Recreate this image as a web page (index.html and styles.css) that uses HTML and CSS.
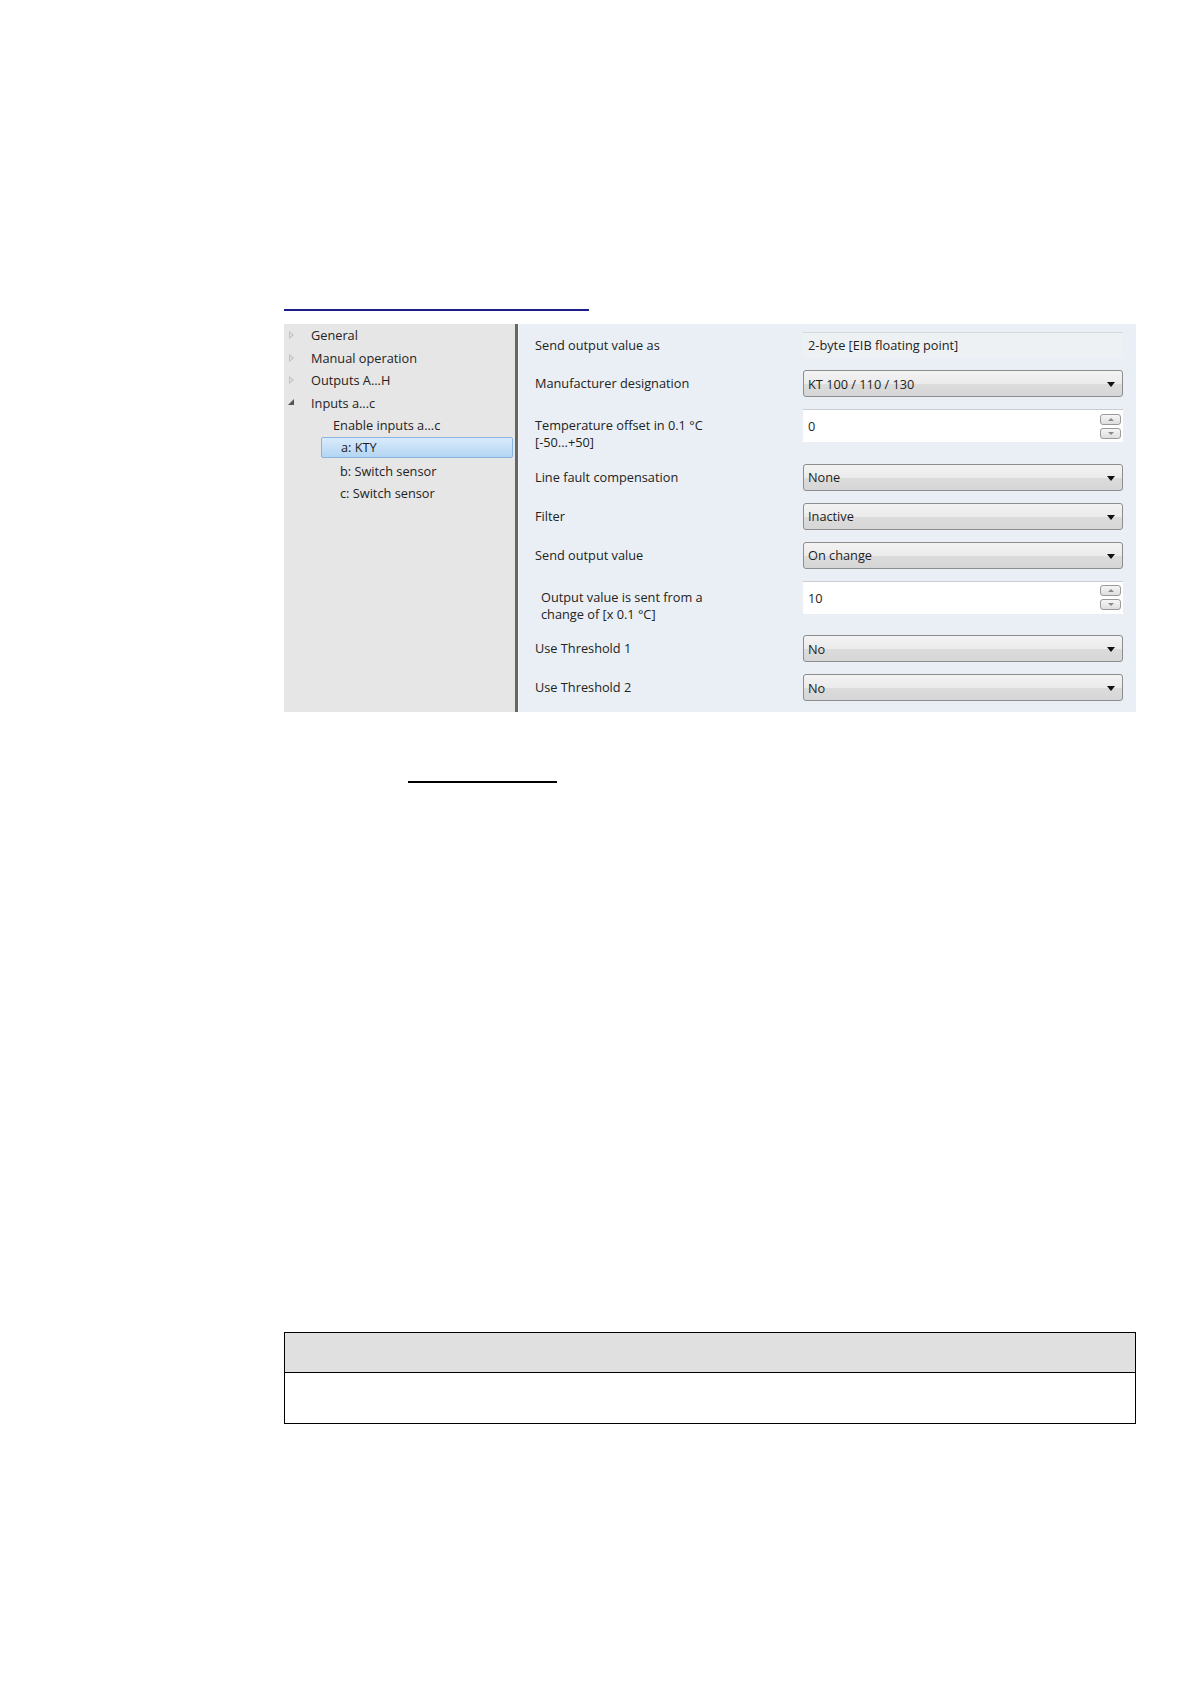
FILE: index.html
```html
<!DOCTYPE html>
<html lang="en">

<head>
    <meta charset="UTF-8">
    <meta name="viewport" content="width=device-width, initial-scale=1.0">
    <title>Inputs a...c - a: KTY</title>
    <link rel="stylesheet" href="styles.css">
</head>

<body>
    <div class="page">
        <!-- hyperlink underline above the figure -->
        <div class="link-rule"></div>

        <!-- screenshot of the parameter window -->
        <div class="screen">
            <div class="tree">
                <div class="tree-item level-0"><span class="twisty"></span>General</div>
                <div class="tree-item level-0"><span class="twisty"></span>Manual operation</div>
                <div class="tree-item level-0"><span class="twisty"></span>Outputs A...H</div>
                <div class="tree-item level-0"><span class="twisty open"></span>Inputs a...c</div>
                <div class="tree-item level-1">Enable inputs a...c</div>
                <div class="tree-item level-2 selected">a: KTY</div>
                <div class="tree-item level-2">b: Switch sensor</div>
                <div class="tree-item level-2">c: Switch sensor</div>
            </div>

            <div class="params">
                <div class="param-row">
                    <div class="param-label">Send output value as</div>
                    <div class="readonly">2-byte [EIB floating point]</div>
                </div>
                <div class="param-row">
                    <div class="param-label">Manufacturer designation</div>
                    <div class="dropdown"><span>KT 100 / 110 / 130</span><span class="caret"></span></div>
                </div>
                <div class="param-row tall">
                    <div class="param-label">Temperature offset in 0.1 °C<br>[-50...+50]</div>
                    <div class="spin">
                        <span>0</span>
                        <div class="spin-buttons">
                            <span class="spin-btn up"></span>
                            <span class="spin-btn down"></span>
                        </div>
                    </div>
                </div>
                <div class="param-row">
                    <div class="param-label">Line fault compensation</div>
                    <div class="dropdown"><span>None</span><span class="caret"></span></div>
                </div>
                <div class="param-row">
                    <div class="param-label">Filter</div>
                    <div class="dropdown"><span>Inactive</span><span class="caret"></span></div>
                </div>
                <div class="param-row">
                    <div class="param-label">Send output value</div>
                    <div class="dropdown"><span>On change</span><span class="caret"></span></div>
                </div>
                <div class="param-row tall">
                    <div class="param-label indent">Output value is sent from a<br>change of [x 0.1 °C]</div>
                    <div class="spin">
                        <span>10</span>
                        <div class="spin-buttons">
                            <span class="spin-btn up"></span>
                            <span class="spin-btn down"></span>
                        </div>
                    </div>
                </div>
                <div class="param-row">
                    <div class="param-label">Use Threshold 1</div>
                    <div class="dropdown"><span>No</span><span class="caret"></span></div>
                </div>
                <div class="param-row">
                    <div class="param-label">Use Threshold 2</div>
                    <div class="dropdown"><span>No</span><span class="caret"></span></div>
                </div>
            </div>
        </div>

        <!-- underlined blank field below the figure -->
        <div class="under-rule"></div>

        <!-- empty note table -->
        <div class="note-table">
            <div class="note-head"></div>
            <div class="note-body"></div>
        </div>
    </div>
</body>

</html>
```

FILE: styles.css
```css
/* root page setup */
body, html {
    margin: 0;
    background: #fff;
    font-family: "Open Sans", "Noto Sans", sans-serif;
}

.page {
    padding-left: 284px;
    width: 852px;
    padding-bottom: 250px;
}

/* blue hyperlink underline */
.link-rule {
    margin-top: 309px;
    width: 305px;
    height: 2px;
    background: #1d1d8e;
}

/* the parameter window */
.screen {
    margin-top: 13px;
    height: 388px;
    display: flex;
    font-size: 12.75px;
    color: #222;
}

/* left hand navigation tree */
.tree {
    width: 239px;
    padding-top: 0;
    background: #e6e6e6;
    border-right: 3px solid #666;
    box-sizing: border-box;
}

.tree-item {
    height: 22.6px;
    line-height: 22.6px;
    display: flex;
    align-items: center;
    white-space: nowrap;
}

.level-0 {
    padding-left: 4px;
}
.level-1 {
    padding-left: 49px;
}
.level-2 {
    padding-left: 56px;
}

/* expand / collapse triangles */
.twisty {
    width: 23px;
    height: 10px;
    display: inline-block;
    position: relative;
}
.twisty::before {
    content: "";
    position: absolute;
    left: 1px;
    top: 1px;
    border-left: 5px solid #c2c2c2;
    border-top: 4px solid transparent;
    border-bottom: 4px solid transparent;
}
.twisty::after {
    content: "";
    position: absolute;
    left: 2px;
    top: 3px;
    border-left: 2px solid #e6e6e6;
    border-top: 2px solid transparent;
    border-bottom: 2px solid transparent;
}
.twisty.open::before {
    left: 0;
    top: 1px;
    border-left: none;
    border-top: none;
    border-bottom: 6px solid #555;
    border-left: 6px solid transparent;
}
.twisty.open::after {
    display: none;
}

/* the currently selected tree node */
.tree-item.selected {
    box-sizing: border-box;
    margin: 0 2px 0 37px;
    padding-left: 19px;
    height: 21px;
    line-height: 19px;
    margin-bottom: 1.6px;
    border: 1px solid #8ab4e0;
    border-radius: 2px;
    background: linear-gradient(#d9ebfb, #b3d5f3);
    color: #1c1c1c;
}

/* right hand parameter list */
.params {
    flex: 1;
    background: #e9eff5;
    padding: 8px 13px 11px 16px;
    display: flex;
    flex-direction: column;
    gap: 12px;
    border-left: 1px solid #f4f6f8;
}

.param-row {
    display: flex;
    align-items: center;
    height: 27px;
}
.param-row.tall {
    height: 43px;
    align-items: flex-start;
}
.param-row:first-child {
    height: 26px;
}

.param-label {
    width: 268px;
    line-height: 17px;
}
.param-row.tall .param-label {
    padding-top: 8px;
}
.param-label.indent {
    padding-left: 6px;
    width: 262px;
}

/* read only value field */
.readonly {
    width: 320px;
    height: 26px;
    box-sizing: border-box;
    padding-left: 5px;
    line-height: 25px;
    background: #eef1f4;
    border-top: 1px solid #d6d9dc;
}

/* combo boxes */
.dropdown {
    width: 320px;
    height: 27px;
    box-sizing: border-box;
    border: 1px solid #8d8d8d;
    border-radius: 3px;
    background: linear-gradient(#f3f3f3 0%, #ebebeb 50%, #dcdcdc 51%, #d6d6d6 100%);
    display: flex;
    align-items: center;
    justify-content: space-between;
    padding: 0 7px 0 4px;
    color: #1e1e1e;
}
.caret {
    width: 0;
    height: 0;
    margin-top: 2px;
    border-left: 4px solid transparent;
    border-right: 4px solid transparent;
    border-top: 5px solid #111;
}

/* numeric spin boxes */
.spin {
    width: 320px;
    height: 33px;
    box-sizing: border-box;
    background: #fff;
    border-top: 1px solid #c9ccd0;
    display: flex;
    align-items: center;
    justify-content: space-between;
    padding: 0 2px 0 5px;
    color: #1e1e1e;
}
.spin-buttons {
    display: flex;
    flex-direction: column;
    gap: 3px;
}
.spin-btn {
    width: 21px;
    height: 11px;
    box-sizing: border-box;
    border: 1px solid #9a9a9a;
    border-radius: 3px;
    background: linear-gradient(#f6f6f6, #dedede);
    display: flex;
    align-items: center;
    justify-content: center;
}
.spin-btn::after {
    content: "";
    border-left: 3px solid transparent;
    border-right: 3px solid transparent;
}
.spin-btn.up::after {
    border-bottom: 3px solid #8a8a8a;
}
.spin-btn.down::after {
    border-top: 3px solid #8a8a8a;
}

/* black underline below the figure */
.under-rule {
    margin-top: 69px;
    margin-left: 124px;
    width: 149px;
    height: 2px;
    background: #000;
}

/* empty table at the bottom of the page */
.note-table {
    margin-top: 549px;
    border: 1.5px solid #000;
}
.note-head {
    height: 39px;
    background: #e0e0e0;
    border-bottom: 1.5px solid #000;
}
.note-body {
    height: 50px;
}
```
